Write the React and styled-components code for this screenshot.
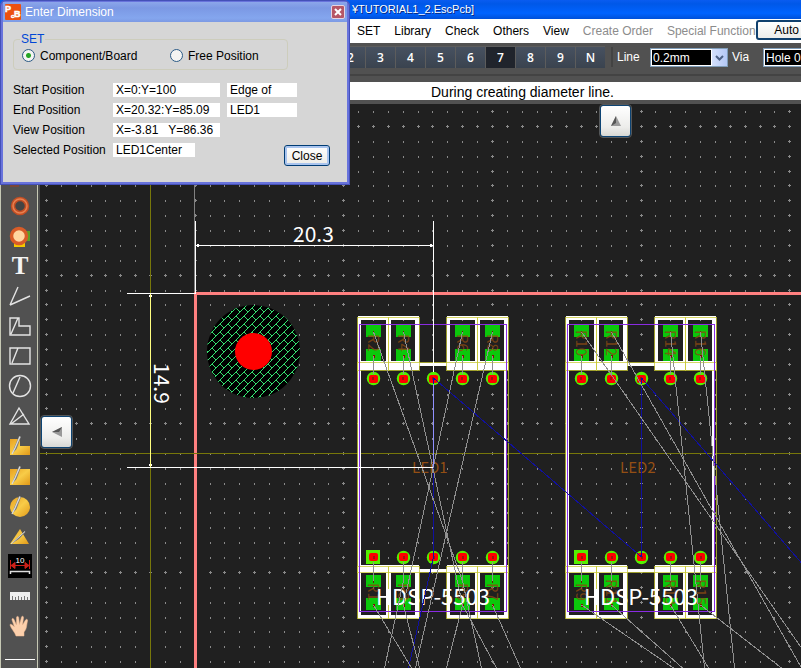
import React from "react";
import styled, { createGlobalStyle } from "styled-components";

const ui = `"Liberation Sans", Arial, sans-serif`;
const cjk = `"Noto Sans CJK JP", sans-serif`;

const GlobalStyle = createGlobalStyle`
  * { box-sizing: border-box; }
  body { margin: 0; background: #202020; font: 12px/16px ${ui}; color: #000; overflow: hidden; }
  button, input, select { font: inherit; margin: 0; padding: 0; }
`;

const Window = styled.main`
  display: flex;
  flex-direction: column;
  height: 100vh;
  position: relative;
`;

const TitleBar = styled.header`
  height: 19px;
  padding-left: 352px;
  background: linear-gradient(#0a5cf0, #0058e8 20%, #0063ff 70%, #0050d8);
  color: #fff;
  font-size: 11px;
  line-height: 18px;
  white-space: nowrap;
  text-shadow: 1px 1px 0 #0a2a80;
`;

const MenuBar = styled.nav`
  height: 24px;
  padding-left: 357px;
  display: flex;
  align-items: center;
  gap: 14px;
  background: #fff;
  overflow: hidden;
`;

const MenuItem = styled.button`
  flex: none;
  border: 0;
  background: none;
  color: #000;
  white-space: nowrap;
  &:disabled { color: #8c8c8c; }
`;

const SpecialMenu = styled.div`
  flex: 1;
  min-width: 0;
  display: flex;
  align-items: center;
`;

const AutoButton = styled.button`
  flex: none;
  width: 62px;
  height: 20px;
  margin-bottom: 2px;
  border: 2px solid #10406e;
  border-radius: 3px;
  background: linear-gradient(#fff, #ececea);
`;

const ToolBar = styled.div`
  height: 39px;
  padding: 3px 0 5px 335px;
  background: #515151;
  overflow: hidden;
`;

const Tools = styled.div`
  display: flex;
  align-items: center;
  padding-bottom: 6px;
  border-bottom: 2px solid #434343;
  color: #fff;
`;

const LayerButton = styled.button`
  flex: none;
  width: 30px;
  height: 22px;
  border: 0;
  border-left: 1px solid #5c5c5c;
  border-top: 1px solid #5c5c5c;
  background: ${(p) => (p.$active ? "#20242c" : "linear-gradient(#475160, #3a434f)")};
  color: #fff;
  font: 600 12px/20px "Open Sans", sans-serif;
`;

const Divider = styled.span`
  flex: none;
  width: 2px;
  height: 20px;
  margin: 0 4px 0 6px;
  background: #434343;
`;

const ToolLabel = styled.label`
  flex: none;
  width: ${(p) => p.$w}px;
`;

const SelectBox = styled.span`
  flex: none;
  display: flex;
  width: 78px;
  height: 19px;
  margin-right: ${(p) => p.$gap}px;
  border: 1px solid #7f9db9;
  background: #000;
  overflow: hidden;
`;

const Select = styled.select`
  flex: 1;
  min-width: 0;
  appearance: none;
  border: 1px solid #fff;
  padding-left: 1px;
  border-radius: 0;
  background: #000;
  color: #fff;
`;

const Arrow = styled.svg`
  flex: none;
  width: 15px;
  height: 17px;
  background: linear-gradient(90deg, #d4e0fc, #b4c8f6);
  pointer-events: none;
`;

const Message = styled.div`
  height: 18px;
  padding-left: 431px;
  background: #fff;
  font-size: 14px;
  line-height: 20px;
  white-space: nowrap;
`;

const Workspace = styled.div`
  flex: 1;
  min-height: 0;
  display: flex;
  border-top: 4px solid #515151;
`;

const SideBar = styled.aside`
  flex: none;
  width: 40px;
  padding-top: 57px;
  background: #515151;
  border-left: 1px solid #c6c8b4;
  border-right: 2px solid #4a4a4a;
  box-shadow: inset -1px 0 #c6c8b4;
  display: flex;
  flex-direction: column;
  align-items: center;
`;

const SideButton = styled.button`
  flex: none;
  width: 30px;
  height: 30px;
  border: 0;
  background: none;
  display: grid;
  place-items: center;
`;

const SideRule = styled.hr`
  flex: none;
  width: 30px;
  height: 1px;
  margin: 18px 0 0;
  border: 0;
  background: #fff;
`;

const Stage = styled.section`
  flex: 1;
  min-width: 0;
  position: relative;
  background: #202020;
`;

const Board = styled.svg`
  display: block;
  width: 100%;
  height: 100%;
`;

const ScrollButton = styled.button`
  position: absolute;
  width: 31px;
  height: 32px;
  left: ${(p) => p.$x}px;
  top: ${(p) => p.$y}px;
  border: 1px solid #0d4474;
  border-radius: 3px;
  outline: 1px solid #55585a;
  background: linear-gradient(#fff, #ededeb 70%, #d8d8d4);
  display: grid;
  place-items: center;
`;

const Dialog = styled.form`
  position: absolute;
  left: 0;
  top: 0;
  width: 350px;
  height: 185px;
  border: 3px solid #6873dc;
  border-top-width: 2px;
  outline: 1px solid #4450b8;
  outline-offset: -1px;
  border-radius: 6px 6px 0 0;
  background: #d6d6d6;
`;

const DialogTitle = styled.header`
  height: 20px;
  padding: 0 2px;
  display: flex;
  align-items: center;
  gap: 4px;
  background: linear-gradient(#8ca6ea, #7b98e4 30%, #84a6ee 80%, #7d9ae4);
  color: #fff;
`;

const DialogName = styled.h1`
  flex: 1;
  margin: 0;
  font-size: 12px;
  line-height: 18px;
  font-weight: 400;
`;

const CloseIcon = styled.button`
  width: 14px;
  height: 14px;
  border: 1px solid #e6d5e2;
  border-radius: 2px;
  background: #b65666;
  display: grid;
  place-items: center;
`;

const DialogBody = styled.div`
  padding: 9px 17px 0 10px;
`;

const Group = styled.fieldset`
  width: 275px;
  height: 39px;
  margin: 0;
  padding: 0 0 0 8px;
  border: 1px solid #cdcdbc;
  border-radius: 4px;
  display: flex;
  align-items: center;
`;

const Legend = styled.legend`
  padding: 0 1px;
  margin-left: -2px;
  color: #0046d5;
`;

const RadioLabel = styled.label`
  width: ${(p) => p.$w};
  display: flex;
  align-items: center;
  gap: 5px;
  padding-bottom: 5px;
`;

const Radio = styled.input`
  appearance: none;
  width: 13px;
  height: 13px;
  border: 1px solid #2b5a86;
  border-radius: 50%;
  background: #f4f4f2;
  &:checked { background: radial-gradient(circle, #25a525 0 2px, #f4f4f2 3px); }
`;

const Fields = styled.div`
  margin-top: 10px;
  display: grid;
  grid-template-columns: 93px 107px 70px;
  column-gap: 7px;
  grid-auto-rows: 20px;
  align-items: center;
`;

const FieldLabel = styled.label`
  white-space: nowrap;
`;

const Field = styled.input`
  width: ${(p) => p.$w || "100%"};
  height: 14px;
  border: 0;
  padding-left: 3px;
  background: #fff;
`;

const CloseButton = styled.button`
  position: absolute;
  right: 17px;
  bottom: 16px;
  width: 46px;
  height: 21px;
  border: 1px solid #003c74;
  border-radius: 3px;
  box-shadow: inset 0 0 0 2px #a9c4ee;
  background: linear-gradient(#fff, #ecebe6);
`;

/* ---------- icons ---------- */

const White = ({ children }) => (
  <g fill="none" stroke="#e4e4e4" strokeWidth="1.4">{children}</g>
);
const Pen = () => (
  <g>
    <path d="M4 20 L6 14 L11 2 L13 3 L8.500 15Z" fill="#777" />
    <path d="M4 20 L7 14 L12 2.500" stroke="#dcdcdc" strokeWidth="1.3" fill="none" />
  </g>
);

const icons = [
  ["Land", <rect x="2" y="12" width="9" height="11" fill="#7a4638" />],
  ["Hole", <g><circle cx="12" cy="12" r="7" fill="#444" stroke="#c24e24" strokeWidth="4.500" /><circle cx="12" cy="12" r="7" fill="none" stroke="#e88050" strokeWidth="1.500" /></g>],
  ["Pad", <g><path d="M15 7h7v10h-7z" fill="#5ca028" /><path d="M6 18h11v5H6z" fill="#f4c800" /><circle cx="11" cy="12" r="7.500" fill="#ffd6a0" stroke="#d85c28" strokeWidth="3.500" /></g>],
  ["Text", <text x="12" y="20" textAnchor="middle" fontFamily="Liberation Serif, serif" fontWeight="700" fontSize="25" fill="#f4f4f4">T</text>],
  ["Line", <White><path d="M2 21 L10 3 M2 21 L22 12" /></White>],
  ["Polygon", <White><path d="M2 4h9v8h11v9H2z M3 20 L10 4" /></White>],
  ["Rectangle", <White><path d="M2 4h20v16H2z M4 19 L10 4" /></White>],
  ["Circle", <White><circle cx="12" cy="12" r="10.500" /><path d="M5 19 L12 3" /></White>],
  ["Triangle", <White><path d="M11 4 L21 20 H2z M3 20 L16 10" /></White>],
  ["Filled polygon", <g><path d="M2 5h10v7h10v9H2z" fill="url(#gold)" /><Pen /></g>],
  ["Filled rectangle", <g><path d="M2 5h20v16H2z" fill="url(#gold)" /><Pen /></g>],
  ["Filled circle", <g><circle cx="12" cy="13" r="10" fill="url(#gold)" /><Pen /></g>],
  ["Filled triangle", <g><path d="M12 5 L21 20 H2z" fill="url(#gold)" /><path d="M3 20 L9 14 L17 7 L17.500 8 L11 15z" fill="#777" /><path d="M3 20 L17 7.500" stroke="#d8d8d8" /></g>],
  ["Dimension", <g><path d="M0 0h24v24H0z" fill="#000" /><path d="M2.500 6v9 M21.500 6v9 M3 11.500h18 M7 8.500L3 11.500L7 14.500z M17 8.500L21 11.500L17 14.500z" stroke="#cc2018" fill="#cc2018" /><path d="M2.500 20v-2.500h19V20" stroke="#ddd" fill="none" strokeWidth="1.500" /><text x="12" y="9" textAnchor="middle" fontSize="8" fontFamily="Liberation Sans, sans-serif" fill="#fff">10</text></g>],
  ["Measure", <g><path d="M2 8h20v8H2z" fill="#eee" /><path d="M4.500 12v4M7.500 13v3M10.500 12v4M13.500 13v3M16.500 12v4M19.500 13v3" stroke="#777" /></g>],
  ["Pan", <path d="M8 22 C7 18 3 15 2 11 C2 9.500 4 10 6.500 13 L4 6 C3.500 4 5.500 4 6 5.500 L8.500 11 L8.500 3.500 C8.500 2 10.500 2 10.700 3.500 L11.500 10.500 L13.500 3 C14 1.700 15.800 2 15.500 4 L14.500 11 L17.500 6 C18.500 4.500 20 5.500 19.500 7 C18.500 11 19 15 16 18 L16 22Z" fill="#fcd0ac" stroke="#f0b890" strokeWidth="0.500" />],
];

/* ---------- board drawing ---------- */

const PITCH = 14.865;
const gridPath = (() => {
  let d = "";
  for (let i = 0; i < 130; i++) {
    for (let j = -1; j < 80; j++) {
      const x = Math.round(46 + i * PITCH);
      const y = Math.round(126 + j * PITCH);
      d += i % 10 === 0 || j % 10 === 0 ? `M${x - 1} ${y}h3v1h-3zM${x} ${y - 1}h1v3h-1z` : `M${x} ${y}h1v2h-1z`;
    }
  }
  return d;
})();

const columns = [373, 403, 462, 492];
const pins = [373, 403, 433, 462, 492];

const Pads = ({ names, top }) =>
  columns.map((x, i) => (
    <g key={x}>
      <rect x={x - 7} y={top ? 325 : 575} width="15" height="12" fill="#0bc80b" />
      <rect x={x - 7} y={top ? 349 : 598} width="15" height="12" fill="#0bc80b" />
      <rect x={x} y={top ? 331 : 580} width="1" height="3" fill="#602000" />
      <rect x={x} y={top ? 355 : 604} width="2" height="3" fill="#801000" />
      <text transform={`translate(${x - 5} ${top ? 343 : 592}) rotate(90)`} textAnchor="middle" fontSize="15" fontFamily={cjk} fill="#8a4a12" opacity="0.8">{names[i]}</text>
    </g>
  ));

const Display = ({ x, label, top, bottom }) => (
  <g transform={`translate(${x} 0)`}>
    <g fill="#fff" shapeRendering="crispEdges">
      <path d="M358 370h3v196h-3z M504 370h3v196h-3z M419 363h28v3h-28z M419 569h28v3h-28z" />
      <path fillRule="evenodd" d="M358 316h61v54h-61z M361 320v41h25v-41z M391 320v41h24v-41z" />
      <path fillRule="evenodd" d="M447 316h61v54h-61z M450 320v41h25v-41z M480 320v41h24v-41z" />
      <path fillRule="evenodd" d="M358 565h61v54h-61z M361 573v42h25v-42z M391 573v42h24v-42z" />
      <path fillRule="evenodd" d="M447 565h61v54h-61z M450 573v42h25v-42z M480 573v42h24v-42z" />
    </g>
    <Pads names={top} top />
    <Pads names={bottom} />
    <g fill="none" stroke="#c8c832" strokeOpacity="0.75" shapeRendering="crispEdges">
      {[357.5, 388.500, 446.5, 477.500].map((bx) => (
        <path key={bx} d={`M${bx} 317.500h31v53h-31z M${bx} 566.500h31v52h-31z`} />
      ))}
      <path d="M357.500 362.500h151v210h-151z" />
    </g>
    <path d="M359.500 324.500h147v287h-147z" fill="none" stroke="#8a2be2" shapeRendering="crispEdges" />
    {pins.map((px, i) => (
      <g key={px}>
        <circle cx={px + 0.5} cy="378.500" r="6.700" fill="#55f000" />
        <rect x={px - 4} y="375" width="9" height="8" rx="2" fill="#f00" />
        <rect x={px - 1} y="377" width="2" height="3" fill="#a01808" />
        {i === 0 ? <rect x={px - 7} y="550" width="14" height="14" fill="#55f000" /> : <circle cx={px + 0.5} cy="557.500" r="6.700" fill="#55f000" />}
        <rect x={px - 4} y="553" width="9" height="8" rx="2" fill="#f00" />
        <rect x={px} y="556" width="2" height="3" fill="#a01808" />
      </g>
    ))}
    <path d={columns.map((c) => `M${c}.5 356V374 M${c}.5 562V581`).join(" ")} stroke="#909090" shapeRendering="crispEdges" />
    <text x="412" y="473" fontSize="15" fontFamily={cjk} fill="#934f14">{label}</text>
    <text x="376" y="605" fontSize="22" fontFamily={cjk} fill="#fff">HDSP-5503</text>
  </g>
);

const nets = [
  [373, 332, 462, 581], [403, 332, 462, 605], [462, 332, 403, 605], [492, 332, 415, 668],
  [373, 605, 411, 668], [403, 605, 419, 668], [403, 581, 384, 668], [462, 605, 446, 668],
  [462, 581, 481, 668], [462, 605, 496, 668], [492, 605, 520, 668],
  [581, 332, 801, 648], [611, 332, 801, 668], [670, 332, 704, 668], [700, 332, 734, 668],
  [581, 605, 673, 668], [611, 605, 682, 668], [670, 605, 708, 668], [700, 605, 781, 668],
];
const blueNets = [[433, 378, 641, 557], [433, 378, 433, 557], [433, 557, 408, 668], [641, 378, 641, 557], [641, 378, 801, 563]];
const toPath = (list) => list.map(([a, b, c, d]) => `M${a}.5 ${b}L${c}.5 ${d}`).join("");

const Drawing = () => (
  <Board role="img" aria-label="Board layout">
    <defs>
      <pattern id="brick" width="8" height="8" patternUnits="userSpaceOnUse">
        <path d="M-1 9L9 -1 M4 4L8 8" stroke="#35e070" fill="none" shapeRendering="crispEdges" />
      </pattern>
    </defs>
    <g transform="translate(-40 -104)">
      <path d={gridPath} fill="#8a8a8a" shapeRendering="crispEdges" />
      <g fill="none" shapeRendering="crispEdges">
        <path d="M194.500 104V293" stroke="#808080" />
        <path d="M195.500 2000V293.500H2000" stroke="#ff8080" strokeWidth="3" />
        <path d="M150.500 104V2000 M40 453.500H2000" stroke="#77770a" />
      </g>
      <circle cx="253.500" cy="351.500" r="46.500" fill="#000" />
      <circle cx="253.500" cy="351.500" r="46.500" fill="url(#brick)" />
      <circle cx="253.500" cy="351.500" r="18.500" fill="#f00" />
      <Display x={0} label="LED1" top={["R2", "R4", "R6", "R8"]} bottom={["R1", "R3", "R5", "R7"]} />
      <Display x={208} label="LED2" top={["R10", "R12", "R14", "R16"]} bottom={["R9", "R11", "R13", "R15"]} />
      <path d={toPath(blueNets)} stroke="#1010a0" shapeRendering="crispEdges" />
      <path d={toPath(nets)} stroke="#909090" shapeRendering="crispEdges" />
      <g stroke="#fff" fill="none" shapeRendering="crispEdges">
        <path d="M195.500 221V293 M433.500 221V372 M196 245.500H433 M127 293.500H196 M127 467.500H433" />
        <path d="M199 244L196 245.500L199 247 M430 244L433 245.500L430 247 M149 297L150.500 294L152 297 M149 464L150.500 467L152 464" />
        <path d="M150.500 294V467" stroke="#ffff80" />
        <path d="M433.500 384V467" stroke="#9090ff" />
      </g>
      <g fill="#fff" fontFamily={cjk} fontSize="21">
        <text x="293" y="242">20.3</text>
        <text transform="translate(154 363) rotate(90)">14.9</text>
      </g>
    </g>
  </Board>
);

const rows = [
  ["Start Position", "X=0:Y=100", "Edge of"],
  ["End Position", "X=20.32:Y=85.09", "LED1"],
  ["View Position", "X=-3.81   Y=86.36"],
  ["Selected Position", "LED1Center", null, "82px"],
];

const DropDown = ({ id, value, gap }) => (
  <SelectBox $gap={gap}>
    <Select id={id} defaultValue={value}><option>{value}</option></Select>
    <Arrow viewBox="0 0 15 17"><path d="M4 7l3.500 3.500L11 7" fill="none" stroke="#4d6185" strokeWidth="2" /></Arrow>
  </SelectBox>
);

export default function App() {
  return (
    <Window>
      <GlobalStyle />
      <TitleBar>¥TUTORIAL1_2.EscPcb]</TitleBar>
      <MenuBar>
        {["SET", "Library", "Check", "Others", "View"].map((m) => <MenuItem key={m}>{m}</MenuItem>)}
        <MenuItem disabled>Create Order</MenuItem>
        <SpecialMenu>
          <MenuItem disabled>Special Function</MenuItem>
          <AutoButton>Auto</AutoButton>
        </SpecialMenu>
      </MenuBar>
      <ToolBar>
        <Tools>
          {["2", "3", "4", "5", "6", "7", "8", "9", "N"].map((n) => <LayerButton key={n} $active={n === "7"}>{n}</LayerButton>)}
          <Divider />
          <ToolLabel htmlFor="line" $w={33}>Line</ToolLabel>
          <DropDown id="line" value="0.2mm" gap={4} />
          <ToolLabel htmlFor="via" $w={31}>Via</ToolLabel>
          <DropDown id="via" value="Hole 0.5" gap={0} />
        </Tools>
      </ToolBar>
      <Message role="status">During creating diameter line.</Message>
      <Workspace>
        <SideBar>
          <svg width="0" height="0" aria-hidden="true">
            <linearGradient id="gold" x2="1" y2="1"><stop stopColor="#e8a020" /><stop offset="0.500" stopColor="#f8cc48" /><stop offset="1" stopColor="#e09818" /></linearGradient>
          </svg>
          {icons.map(([name, art]) => (
            <SideButton key={name} aria-label={name}><svg width="24" height="24" viewBox="0 0 24 24">{art}</svg></SideButton>
          ))}
          <SideRule />
        </SideBar>
        <Stage>
          <Drawing />
          <ScrollButton $x={560} $y={1} aria-label="Scroll up"><svg width="12" height="12"><path d="M1 11L6 1L11 11z" fill="#999" /><path d="M1 11L6 1L6 8z" fill="#555" /></svg></ScrollButton>
          <ScrollButton $x={1} $y={312} aria-label="Scroll left"><svg width="12" height="12"><path d="M11 1L1 6L11 11z" fill="#999" /><path d="M11 1L1 6L8 6z" fill="#555" /></svg></ScrollButton>
        </Stage>
      </Workspace>
      <Dialog aria-label="Enter Dimension" onSubmit={(e) => e.preventDefault()}>
        <DialogTitle>
          <svg width="16" height="16" viewBox="0 0 16 16" aria-hidden="true">
            <rect width="16" height="16" rx="1" fill="#ec5010" />
            <g fill="#fff" stroke="#fff" strokeWidth="0.500" fontFamily="Liberation Sans, sans-serif" fontWeight="700">
              <text x="0" y="8" fontSize="9">P</text>
              <text x="6" y="14" fontSize="6">c</text>
              <text x="9" y="13" fontSize="9">B</text>
            </g>
          </svg>
          <DialogName>Enter Dimension</DialogName>
          <CloseIcon type="button" aria-label="Close window"><svg width="8" height="8"><path d="M1 1L7 7M7 1L1 7" stroke="#fff" strokeWidth="2" /></svg></CloseIcon>
        </DialogTitle>
        <DialogBody>
          <Group>
            <Legend>SET</Legend>
            <RadioLabel $w="148px"><Radio type="radio" name="set" defaultChecked />Component/Board</RadioLabel>
            <RadioLabel $w="auto"><Radio type="radio" name="set" />Free Position</RadioLabel>
          </Group>
          <Fields>
            {rows.map(([name, a, b, w], i) => (
              <React.Fragment key={name}>
                <FieldLabel htmlFor={`f${i}`}>{name}</FieldLabel>
                <Field id={`f${i}`} defaultValue={a} $w={w} />
                {b ? <Field aria-label={`${name} item`} defaultValue={b} /> : <span />}
              </React.Fragment>
            ))}
          </Fields>
        </DialogBody>
        <CloseButton type="button">Close</CloseButton>
      </Dialog>
    </Window>
  );
}
